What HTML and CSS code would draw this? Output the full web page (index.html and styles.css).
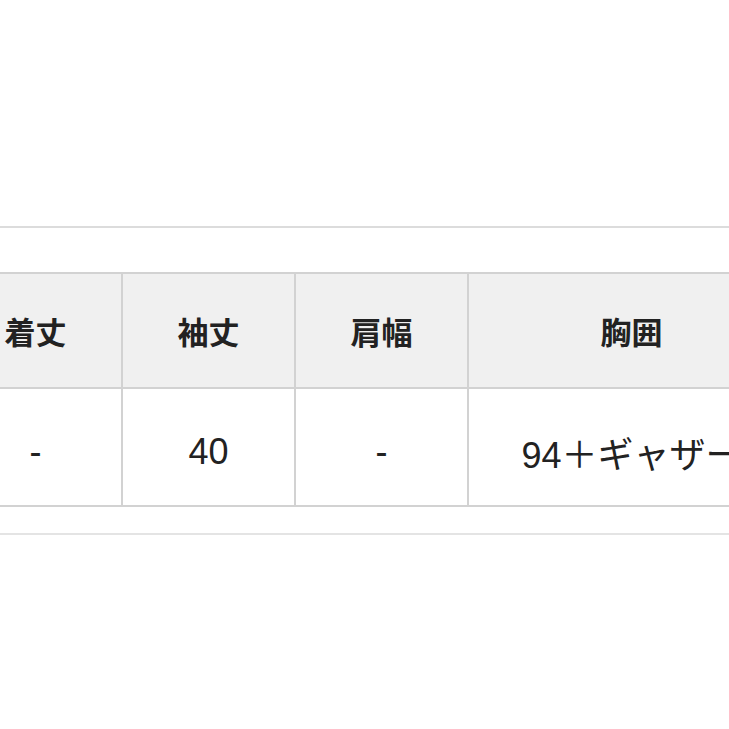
FILE: index.html
```html
<!DOCTYPE html>
<html lang="ja">
<head>
<meta charset="utf-8">
<title>サイズ表</title>
<link rel="stylesheet" href="styles.css">
</head>
<body>
<div class="page">
  <section class="size-section">
    <table class="size-table">
      <thead>
        <tr>
          <th class="col-narrow">着丈</th>
          <th class="col-narrow">袖丈</th>
          <th class="col-narrow">肩幅</th>
          <th class="col-wide">胸囲</th>
        </tr>
      </thead>
      <tbody>
        <tr>
          <td>-</td>
          <td>40</td>
          <td>-</td>
          <td>94＋ギャザー</td>
        </tr>
      </tbody>
    </table>
  </section>
</div>
</body>
</html>
```

FILE: styles.css
```css
html, body {
  margin: 0;
  padding: 0;
  background: #ffffff;
}

.page {
  width: 729px;
  height: 729px;
  overflow: hidden;
  padding-top: 226px;
  box-sizing: border-box;
}

.size-section {
  border-top: 2px solid #dcdcdc;
  border-bottom: 2px solid #e4e4e4;
  padding: 44px 0 26px 0;
}

.size-table {
  border-collapse: separate;
  border-spacing: 0;
  margin-left: -52px;
  font-family: "Liberation Sans", "Noto Sans CJK JP", sans-serif;
  color: #222222;
  table-layout: fixed;
  width: 846px;
}

.size-table th,
.size-table td {
  border-top: 2px solid #d2d2d2;
  border-left: 2px solid #d2d2d2;
  text-align: center;
  padding: 0;
  box-sizing: border-box;
}

.size-table .col-narrow {
  width: 173px;
}

.size-table .col-wide {
  width: 327px;
}

.size-table th {
  height: 115px;
  background: #f0f0f0;
  font-family: "Noto Sans CJK JP", sans-serif;
  font-weight: 700;
  font-size: 31px;
}

.size-table td {
  height: 120px;
  background: #ffffff;
  font-size: 36px;
  font-weight: 400;
  border-bottom: 2px solid #d2d2d2;
  padding-top: 9px;
}
```
